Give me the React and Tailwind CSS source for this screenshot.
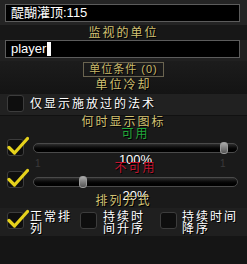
import React from "react";

const FONT = { fontFamily: '"Liberation Sans", "Noto Sans CJK SC", sans-serif' };
const SH = "[text-shadow:1px_1px_0_#000]";

const Gold = ({ children, className = "" }) => (
  <div
    className={`text-[12px] leading-[12px] tracking-[2px] text-[#d2c172] text-center ${SH} ${className}`}
  >
    {children}
  </div>
);

const Box = ({ checked }) => (
  <div className="relative w-[17px] h-[17px] shrink-0 rounded-[3px] border border-[#3c3c3c] bg-[#0e0e0e]">
    {checked && (
      <svg
        className="absolute -left-[1px] -top-[4px]"
        width="22"
        height="20"
        viewBox="0 0 22 20"
      >
        <path
          d="M2 11.5 L7.5 17 L20.5 2.5"
          fill="none"
          stroke="#e6d21c"
          strokeWidth="3.2"
          strokeLinecap="round"
          strokeLinejoin="round"
        />
      </svg>
    )}
  </div>
);

const Track = ({ thumb, className = "" }) => (
  <div
    className={`relative h-[10px] w-[205px] rounded-full border border-[#4a4a4a] bg-gradient-to-b from-[#2e2e2e] via-[#080808] to-[#000] ${className}`}
  >
    <div
      className={`absolute -top-[2px] ${thumb} w-[8px] h-[12px] rounded-[3px] border border-[#999] bg-gradient-to-b from-[#aaa] to-[#555]`}
    />
  </div>
);

const Input = ({ children }) => (
  <div className="mx-[5px] h-[18px] w-[235px] border border-[#5c5c5c] bg-black flex items-center pl-[5px] text-[13px] text-white">
    {children}
  </div>
);

export default function App() {
  return (
    <div className="w-[247px] h-[264px] bg-[#151515] overflow-hidden" style={FONT}>
      <div className="bg-[#242424] pt-[4px] h-[25px]">
        <Input>醍醐灌顶:115</Input>
      </div>
      <div className="bg-[#171717] h-[15px] pt-[2px]">
        <Gold>监视的单位</Gold>
      </div>
      <div className="bg-[#202020] h-[21px]">
        <Input>
          <span>player</span>
          <span className="ml-[1px] inline-block w-[4px] h-[14px] bg-white" />
        </Input>
      </div>
      <div className="bg-gradient-to-b from-[#1c1c1c] to-[#141414] h-[33px] pt-[1px]">
        <div
          className={`mx-auto w-[81px] h-[15px] border border-[#6a6450] flex items-center justify-center text-[11px] tracking-[1px] text-[#c9b86a] ${SH}`}
        >
          单位条件 (0)
        </div>
        <Gold className="mt-[2px]">单位冷却</Gold>
      </div>
      <div className="bg-[#212121] h-[21px] flex items-center pl-[7px] gap-[6px] pb-[2px]">
        <Box />
        <span className={`text-[12px] tracking-[2px] text-white leading-[12px] ${SH}`}>
          仅显示施放过的法术
        </span>
      </div>
      <div className="bg-[#1a1a1a] h-[93px] border-t border-[#111]">
        <Gold className="h-[12px]">何时显示图标</Gold>
        <div className="pl-[33px] w-[238px] h-[12px]">
          <div className={`text-center text-[12px] leading-[12px] tracking-[2px] text-[#1fa83a] ${SH}`}>
            可用
          </div>
        </div>
        <div className="flex items-start pl-[7px] gap-[9px] -mt-[1px] h-[17px]">
          <Box checked />
          <Track thumb="left-[186px]" className="mt-[4px]" />
        </div>
        <div className="relative pl-[33px] w-[238px] -mt-[3px]">
          <div className="absolute left-[35px] top-[3px] text-[10px] text-[#3a3a3a]">1</div>
          <div className="absolute left-[220px] top-[3px] text-[10px] text-[#3a3a3a]">1</div>
          <div className={`text-center text-[13px] leading-[13px] text-white ${SH}`}>100%</div>
          <div className={`-mt-[4px] text-center text-[12px] leading-[12px] tracking-[2px] text-[#c41530] ${SH}`}>
            不可用
          </div>
        </div>
        <div className="flex items-start pl-[7px] gap-[9px] -mt-[3px] h-[17px]">
          <Box checked />
          <Track thumb="left-[45px]" className="mt-[6px]" />
        </div>
        <div className="pl-[33px] w-[238px] mt-[1px]">
          <div className={`text-center text-[13px] leading-[13px] text-white ${SH}`}>20%</div>
        </div>
      </div>
      <div className="-mt-[13px] h-[13px]">
        <Gold>排列方式</Gold>
      </div>
      <div
        className={`bg-[#1f1f1f] h-[28px] flex items-start pt-[3px] text-[12px] leading-[12px] tracking-[2px] text-white ${SH}`}
      >
        <div className="w-[80px] pl-[7px] flex gap-[6px]">
          <div className="mt-[1px]">
            <Box checked />
          </div>
          <span className="w-[50px]">正常排列</span>
        </div>
        <div className="w-[80px] flex gap-[6px]">
          <div className="mt-[1px]">
            <Box />
          </div>
          <span className="w-[50px]">持续时间升序</span>
        </div>
        <div className="flex gap-[5px]">
          <div className="mt-[1px]">
            <Box />
          </div>
          <span className="w-[58px]">持续时间降序</span>
        </div>
      </div>
    </div>
  );
}
